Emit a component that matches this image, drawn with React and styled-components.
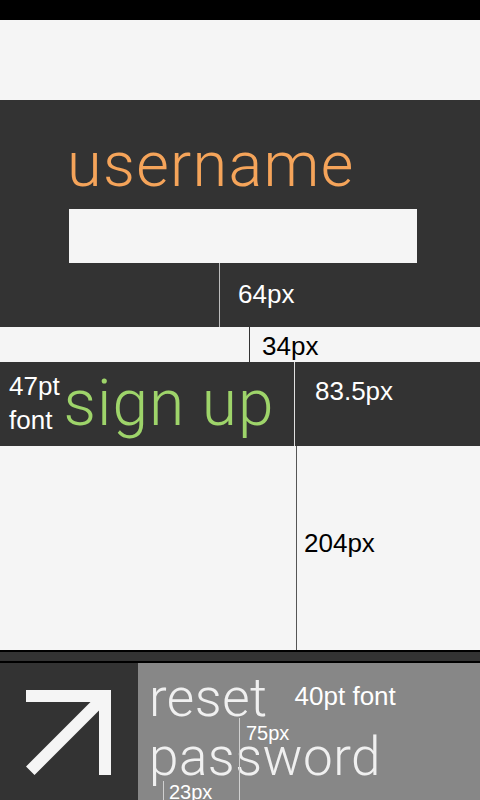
import React from 'react';
import styled, { createGlobalStyle } from 'styled-components';

const GlobalStyle = createGlobalStyle`
  html, body {
    margin: 0;
    padding: 0;
    background: #f5f5f5;
  }
  body {
    font-family: "Liberation Sans", Arial, sans-serif;
  }
`;

const Screen = styled.div`
  width: 480px;
  height: 800px;
  overflow: hidden;
  display: flex;
  flex-direction: column;
  background: #f5f5f5;
`;

const StatusBar = styled.div`
  height: 20px;
  background: #000;
  flex-shrink: 0;
`;

const Spacer = styled.div`
  position: relative;
  height: ${(p) => p.h}px;
  flex-shrink: 0;
  background: #f5f5f5;
`;

const UserPanel = styled.div`
  position: relative;
  height: 227px;
  flex-shrink: 0;
  background: #333333;
  padding: 33px 0 0 67px;
  box-sizing: border-box;
`;

const BigLabel = styled.div`
  font-family: Roboto, "Liberation Sans", sans-serif;
  font-weight: 300;
  font-size: ${(p) => p.size}px;
  line-height: 1;
  color: ${(p) => p.color};
  letter-spacing: ${(p) => p.spacing || 0}px;
  white-space: nowrap;
`;

const InputBox = styled.div`
  margin: 13px 0 0 2px;
  width: 348px;
  height: 54px;
  background: #f5f5f5;
`;

const SignUpBar = styled.div`
  position: relative;
  height: 84px;
  flex-shrink: 0;
  background: #333333;
  display: flex;
  align-items: center;
  padding-left: 9px;
  gap: 4px;
`;

const Note = styled.div`
  font-family: "Liberation Sans", Arial, sans-serif;
  font-size: ${(p) => p.size || 26}px;
  line-height: ${(p) => p.lh || 1}em;
  color: ${(p) => (p.dark ? '#000' : '#fff')};
  white-space: nowrap;
`;

const FontNote = styled(Note)`
  margin-top: 14px;
`;

// a measuring line with its label beside it, laid over the mockup
const Annotation = styled.div`
  position: absolute;
  left: ${(p) => p.x}px;
  top: ${(p) => p.y}px;
  height: ${(p) => p.len}px;
  border-left: 1px solid ${(p) => p.line};
  padding: ${(p) => p.ty || 0}px 0 0 ${(p) => p.tx || 0}px;
  box-sizing: border-box;
`;

const Divider = styled.div`
  height: 13px;
  flex-shrink: 0;
  background: #333333;
  border-top: 2px solid #000;
  border-bottom: 2px solid #000;
  box-sizing: border-box;
`;

const BottomRow = styled.div`
  flex: 1;
  display: flex;
`;

const ArrowTile = styled.div`
  width: 138px;
  background: #333333;
  padding: 27px 0 0 25px;
  box-sizing: border-box;
`;

const ResetTile = styled.div`
  position: relative;
  flex: 1;
  background: #878787;
  padding: 6px 0 0 11px;
`;

const ResetLine = styled.div`
  display: flex;
  align-items: flex-start;
  gap: 27px;
`;

const ResetWord = styled(BigLabel)`
  line-height: 59px;
`;

export default function App() {
  return (
    <>
      <GlobalStyle />
      <Screen>
        <StatusBar />
        <Spacer h={80} />
        <UserPanel>
          <BigLabel size={63} color="#f5a45a" spacing={1.3}>username</BigLabel>
          <InputBox />
          <Annotation x={219} y={163} len={64} line="#bdbdbd" tx={18} ty={18}>
            <Note>64px</Note>
          </Annotation>
        </UserPanel>
        <Spacer h={35}>
          <Annotation x={249} y={0} len={35} line="#333" tx={12} ty={6}>
            <Note dark>34px</Note>
          </Annotation>
        </Spacer>
        <SignUpBar>
          <Note lh={1.3}>47pt<br />font</Note>
          <BigLabel size={64} color="#9ed46a" spacing={1}>sign up</BigLabel>
          <Annotation x={294} y={0} len={84} line="#e0e0e0" tx={20} ty={16}>
            <Note>83.5px</Note>
          </Annotation>
        </SignUpBar>
        <Spacer h={204}>
          <Annotation x={296} y={0} len={204} line="#555" tx={7} ty={84}>
            <Note dark>204px</Note>
          </Annotation>
        </Spacer>
        <Divider />
        <BottomRow>
          <ArrowTile>
            <svg width="87" height="86" viewBox="0 0 87 86">
              <path d="M1 0 H86 V85 H74 V20.5 L9.5 85 L1 76.5 L65.5 12 H1 Z" fill="#f5f5f5" />
            </svg>
          </ArrowTile>
          <ResetTile>
            <ResetLine>
              <ResetWord size={53} color="#f0f0f0" spacing={0.5}>reset</ResetWord>
              <FontNote>40pt font</FontNote>
            </ResetLine>
            <ResetWord size={53} color="#f0f0f0" spacing={0.5}>password</ResetWord>
            <Annotation x={101} y={55} len={82} line="#d0d0d0" tx={6} ty={5}>
              <Note size={20}>75px</Note>
            </Annotation>
            <Annotation x={25} y={118} len={20} line="#d0d0d0" tx={5} ty={1}>
              <Note size={20}>23px</Note>
            </Annotation>
          </ResetTile>
        </BottomRow>
      </Screen>
    </>
  );
}
